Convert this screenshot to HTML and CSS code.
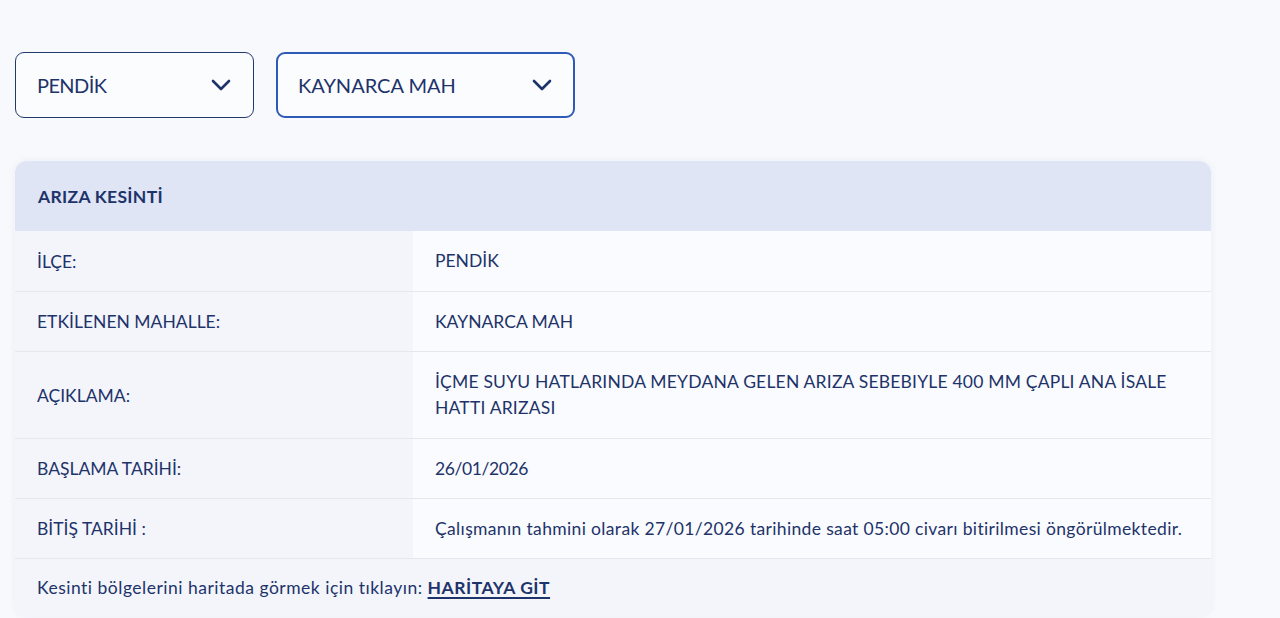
FILE: index.html
```html
<!DOCTYPE html>
<html lang="tr">
<head>
<meta charset="utf-8">
<title>Arıza Kesinti</title>
<link rel="stylesheet" href="styles.css">
</head>
<body>
<div class="page">
  <div class="filters">
    <div class="select select-district">
      <span>PENDİK</span>
      <svg class="chev" width="20" height="12" viewBox="0 0 20 12"><path d="M2 2 L10 10 L18 2" fill="none" stroke="currentColor" stroke-width="2.6" stroke-linecap="round" stroke-linejoin="round"/></svg>
    </div>
    <div class="select select-hood focused">
      <span>KAYNARCA MAH</span>
      <svg class="chev" width="20" height="12" viewBox="0 0 20 12"><path d="M2 2 L10 10 L18 2" fill="none" stroke="currentColor" stroke-width="2.6" stroke-linecap="round" stroke-linejoin="round"/></svg>
    </div>
  </div>

  <div class="card">
    <div class="card-head">ARIZA KESİNTİ</div>
    <div class="row row-first">
      <div class="label">İLÇE:</div>
      <div class="value">PENDİK</div>
    </div>
    <div class="row">
      <div class="label">ETKİLENEN MAHALLE:</div>
      <div class="value">KAYNARCA MAH</div>
    </div>
    <div class="row row-tall">
      <div class="label">AÇIKLAMA:</div>
      <div class="value value-desc">İÇME SUYU HATLARINDA MEYDANA GELEN ARIZA SEBEBIYLE 400 MM ÇAPLI ANA İSALE HATTI ARIZASI</div>
    </div>
    <div class="row">
      <div class="label">BAŞLAMA TARİHİ:</div>
      <div class="value value-date">26/01/2026</div>
    </div>
    <div class="row">
      <div class="label">BİTİŞ TARİHİ :</div>
      <div class="value value-text">Çalışmanın tahmini olarak 27/01/2026 tarihinde saat 05:00 civarı bitirilmesi öngörülmektedir.</div>
    </div>
    <div class="card-foot">Kesinti bölgelerini haritada görmek için tıklayın: <a href="#" class="map-link">HARİTAYA GİT</a></div>
  </div>
</div>
</body>
</html>
```

FILE: styles.css
```css
* { box-sizing: border-box; }
html, body { margin: 0; padding: 0; }
body {
  background: #f7f9fc;
  font-family: Lato, "Noto Sans", sans-serif;
  color: #1d336a;
  height: 618px;
  overflow: hidden;
}
.page {
  padding: 52px 69px 0 15px;
}
.filters {
  display: flex;
  gap: 22px;
}
.select {
  height: 66px;
  border: 1px solid #22396e;
  border-radius: 9px;
  background: #fbfcfe;
  display: flex;
  align-items: center;
  justify-content: space-between;
  padding: 0 22px 0 21px;
  font-size: 20px;
  color: #1d336a;
}
.select-district { width: 239px; }
.select-district span { letter-spacing: -0.6px; }
.select-hood { width: 299px; }
.select.focused {
  border: 2px solid #2d5bb7;
  padding-left: 20px;
  padding-right: 21px;
}
.chev { color: #1d336a; display: block; }

.card {
  margin-top: 43px;
  border-radius: 12px;
  overflow: hidden;
  background: #fafbfe;
  box-shadow: 0 0 6px rgba(210, 216, 230, 0.35);
}
.card-head {
  height: 70px;
  background: #dfe5f5;
  display: flex;
  align-items: center;
  padding-left: 23px;
  font-weight: 700;
  font-size: 17.5px;
  letter-spacing: 0.3px;
}
.row {
  display: grid;
  grid-template-columns: 398px 1fr;
  min-height: 60px;
  border-bottom: 1px solid #e4e7ee;
}
.row-first { min-height: 61px; }
.row-tall { min-height: 87px; }
.label {
  background: #f3f5fb;
  padding: 0 16px 0 22px;
  display: flex;
  align-items: center;
  font-size: 17.5px;
}
.value {
  background: #fafbfe;
  padding: 0 30px 0 22px;
  display: flex;
  align-items: center;
  font-size: 17.5px;
  line-height: 26px;
}
.value-desc { letter-spacing: 0.2px; }
.value-date { letter-spacing: -0.4px; }
.value-text { letter-spacing: 0.35px; white-space: nowrap; padding-right: 0; }
.card-foot {
  background: #f3f5fb;
  height: 57px;
  display: flex;
  align-items: center;
  padding-left: 22px;
  font-size: 17.5px;
  letter-spacing: 0.5px;
}
.map-link {
  color: #1d336a;
  font-weight: 700;
  margin-left: 5px;
  text-decoration: underline;
  text-underline-offset: 3px;
  text-decoration-thickness: 2px;
}
```
